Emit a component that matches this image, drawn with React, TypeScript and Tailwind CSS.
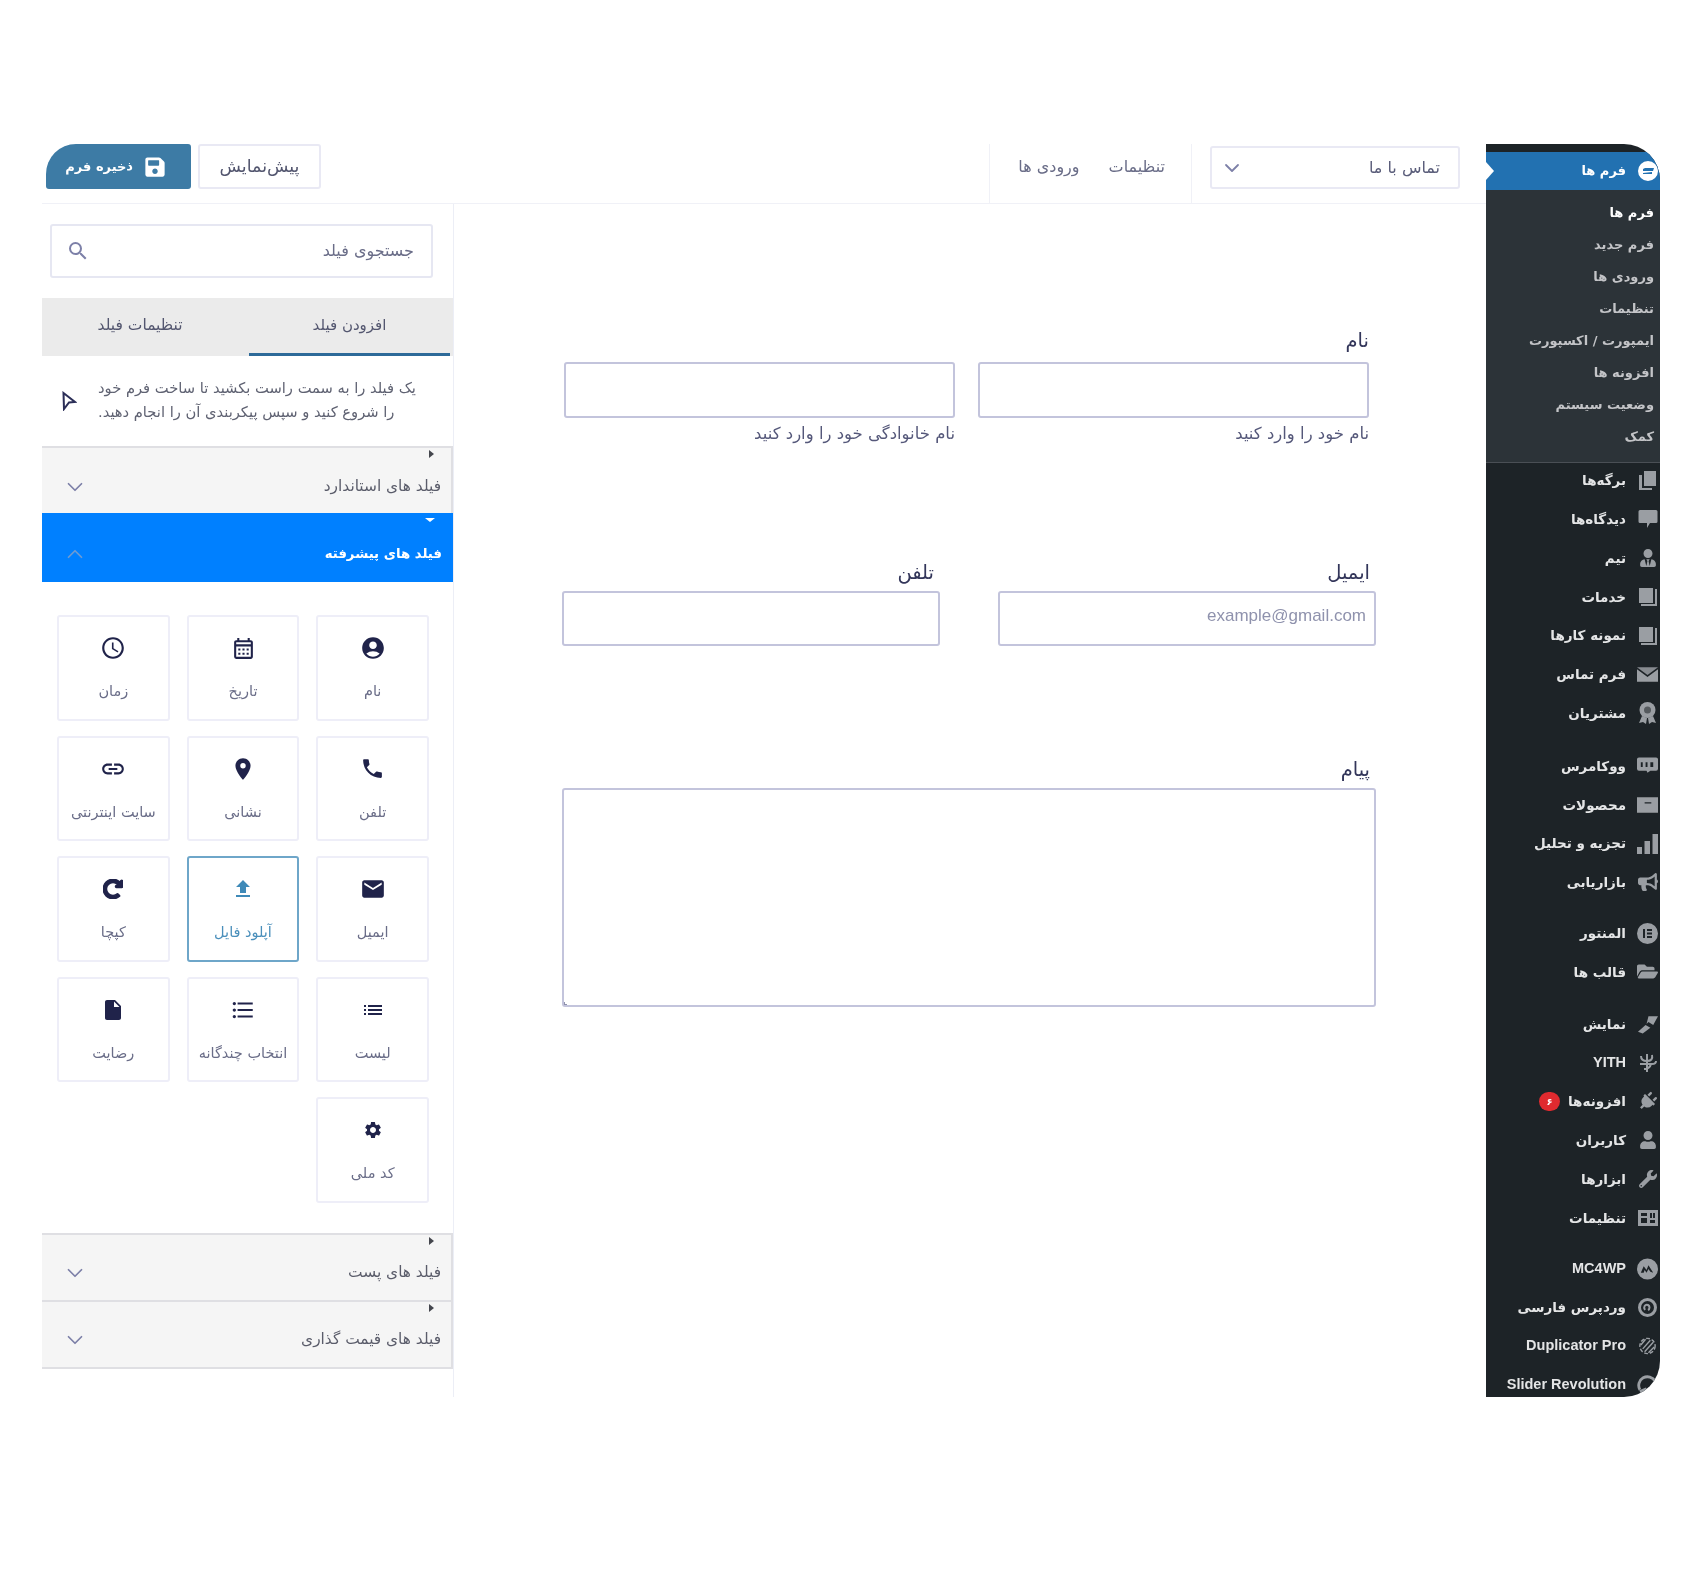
import React from "react";
import { ChevronDown, ChevronUp } from "lucide-react";
import {
  MdAccountCircle, MdOutlineCalendarMonth, MdAccessTime, MdPhone, MdLocationOn, MdLink, MdEmail,
  MdFileUpload, MdList, MdFormatListBulleted, MdInsertDriveFile, MdSettings, MdSearch,
} from "react-icons/md";
import { FaSave, FaRedoAlt, FaUserTie, FaBullhorn, FaPlug, FaUser, FaWrench, FaFolderOpen } from "react-icons/fa";

const Pages = () => (
  <svg width="19" height="19" viewBox="0 0 19 19" fill="currentColor"><path d="M6 0h12v15H6z" /><path d="M1 4h3v13h10v2H1z" /></svg>
);
const Bubble = () => (
  <svg width="20" height="20" viewBox="0 0 20 20" fill="currentColor"><path d="M2 1h16a1.5 1.5 0 0 1 1.5 1.5v10A1.5 1.5 0 0 1 18 14h-6l-3 5v-5H2A1.5 1.5 0 0 1 .5 12.500v-10A1.500 1.500 0 0 1 2 1z" /></svg>
);
const Book = () => (
  <svg width="21" height="21" viewBox="0 0 21 21" fill="currentColor"><path d="M2 2h14v15H2z" /><path d="M18 3h2v17H4v-2h14z" /></svg>
);
const Envelope = () => (
  <svg width="22" height="15" viewBox="0 0 22 15" fill="currentColor"><path d="M0 0h22L11 8z" opacity=".85" /><path d="M0 2l11 8 11-8v13H0z" /></svg>
);
const Rosette = () => (
  <svg width="19" height="22" viewBox="0 0 19 22" fill="currentColor"><circle cx="9.500" cy="8" r="8" /><path d="M4 14l-3 7 4-1 3 2 1-6zM15 14l3 7-4-1-3 2-1-6z" /><circle cx="9.500" cy="8" r="3.500" fill="#1d2327" opacity=".55" /></svg>
);
const Woo = () => (
  <svg width="22" height="17" viewBox="0 0 22 17" fill="currentColor"><path fillRule="evenodd" d="M2 0h18a2 2 0 0 1 2 2v10a2 2 0 0 1-2 2h-6l-3 2 -1-2H2a2 2 0 0 1-2-2V2a2 2 0 0 1 2-2zM4 5v5h2V5zm5 0v5h2V5zm5 0v5h3V5z" /></svg>
);
const Box = () => (
  <svg width="22" height="16" viewBox="0 0 22 16" fill="currentColor"><path fillRule="evenodd" d="M0 0h22v16H0zM8 5v1.500h7V5z" /></svg>
);
const Bars = () => (
  <svg width="21" height="20" viewBox="0 0 21 20" fill="currentColor"><path d="M0 13h5v7H0zM7.500 7h5.500v13H7.500zM15.500 0H21v20h-5.500z" /></svg>
);
const Elementor = () => (
  <svg width="21" height="21" viewBox="0 0 21 21" fill="currentColor"><path fillRule="evenodd" d="M10.500 0a10.500 10.500 0 1 1 0 21 10.500 10.500 0 0 1 0-21zM6 6v9h2V6zm4 0v2h5V6zm0 3.500v2h5v-2zm0 3.500v2h5v-2z" /></svg>
);
const Brush = () => (
  <svg width="22" height="20" viewBox="0 0 22 20" fill="currentColor"><path d="M12 2h10l-5 9-5-3-2 2z" /><path d="M9 11l5 3-8 6-5-2z" /></svg>
);
const Yith = () => (
  <svg width="18" height="20" viewBox="0 0 18 20" fill="none" stroke="currentColor" strokeWidth="2"><path d="M2 3c0 4 3 5 6 5M8 1v18M13 2c1 4-1 6-5 6M1 11h12c3 0 4-1 4-3M5 16c3 0 6-1 7-5" /></svg>
);
const SettingsBox = () => (
  <svg width="20" height="16" viewBox="0 0 20 16" fill="currentColor"><path fillRule="evenodd" d="M0 0h20v16H0zM3 3v3h6V3zm0 5v5h6V8zm9-5v5h2V3zm3 0v5h2V3zm-3 7v3h5v-3z" /></svg>
);
const Mc = () => (
  <svg width="22" height="22" viewBox="0 0 22 22" fill="currentColor"><path fillRule="evenodd" d="M11 0a11 11 0 1 1 0 22 11 11 0 0 1 0-22zM4 15l3-7 3 4 2-5 5 8-3-1-2-3-2 4-2-3-1 3z" /></svg>
);
const WpFa = () => (
  <svg width="19" height="19" viewBox="0 0 19 19" fill="none" stroke="currentColor" strokeWidth="3"><circle cx="9.500" cy="9.500" r="8" /><path d="M7 12c-2-3 0-6 3-5 2 1 2 4 0 5" strokeWidth="2" /></svg>
);
const Dup = () => (
  <svg width="22" height="22" viewBox="0 0 22 22" fill="none" stroke="currentColor" strokeWidth="1.500"><circle cx="11" cy="11" r="8" strokeDasharray="4 2" /><path d="M6 14 14 5M8 17l9-10M4 10l5-6M12 18l6-6" /></svg>
);
const Slider = () => (
  <svg width="22" height="22" viewBox="0 0 22 22" fill="none" stroke="currentColor" strokeWidth="3"><path d="M3 16A9 9 0 0 1 19 7" /><path d="M3 18l7-3" /></svg>
);

type Item = { label: string; icon: React.ReactNode; gap?: string; badge?: string; latin?: boolean };
const menu: Item[] = [
  { label: "برگه‌ها", icon: <Pages /> },
  { label: "دیدگاه‌ها", icon: <Bubble /> },
  { label: "تیم", icon: <FaUserTie size={18} /> },
  { label: "خدمات", icon: <Book /> },
  { label: "نمونه کارها", icon: <Book /> },
  { label: "فرم تماس", icon: <Envelope /> },
  { label: "مشتریان", icon: <Rosette /> },
  { label: "ووکامرس", icon: <Woo />, gap: "mt-[14px]" },
  { label: "محصولات", icon: <Box /> },
  { label: "تجزیه و تحلیل", icon: <Bars /> },
  { label: "بازاریابی", icon: <FaBullhorn size={20} /> },
  { label: "المنتور", icon: <Elementor />, gap: "mt-[12px]" },
  { label: "قالب ها", icon: <FaFolderOpen size={21} /> },
  { label: "نمایش", icon: <Brush />, gap: "mt-[13px]" },
  { label: "YITH", icon: <Yith />, latin: true },
  { label: "افزونه‌ها", icon: <FaPlug size={19} className="rotate-45" />, badge: "۶" },
  { label: "کاربران", icon: <FaUser size={18} /> },
  { label: "ابزارها", icon: <FaWrench size={18} /> },
  { label: "تنظیمات", icon: <SettingsBox /> },
  { label: "MC4WP", icon: <Mc />, gap: "mt-[12px]", latin: true },
  { label: "وردپرس فارسی", icon: <WpFa /> },
  { label: "Duplicator Pro", icon: <Dup />, latin: true },
  { label: "Slider Revolution", icon: <Slider />, latin: true },
];
const sub = ["فرم ها", "فرم جدید", "ورودی ها", "تنظیمات", "ایمپورت / اکسپورت", "افزونه ها", "وضعیت سیستم", "کمک"];

function Sidebar() {
  return (
    <aside className="w-[174px] h-[1253px] shrink-0 bg-[#1d2327] rounded-tr-[36px] rounded-br-[36px] overflow-hidden pt-[8px]">
      <div className="relative h-[38px] bg-[#2271b1] flex items-center pr-[2px] text-white">
        <span className="w-[21px] flex justify-center">
          <svg width="20" height="20" viewBox="0 0 20 20" fill="currentColor"><path fillRule="evenodd" d="M10 0a10 10 0 1 1 0 20 10 10 0 0 1 0-20zM5 8v2h10l1-3H7zM5 12v1h9v-2z" /></svg>
        </span>
        <span className="mr-[11px] text-[13px] font-bold">فرم ها</span>
        <span className="absolute left-0 top-1/2 -translate-y-1/2 w-0 h-0 border-y-[9px] border-y-transparent border-l-[8px] border-l-white" />
      </div>
      <div className="bg-[#2c3338] h-[273px] pt-[7px] pr-[6px] border-b border-[#4a4f55]">
        {sub.map((s, i) => (
          <div key={s} className={`h-[32px] flex items-center text-[13px] font-bold ${i === 0 ? "text-white" : "text-[#c3c4c7]"}`}>{s}</div>
        ))}
      </div>
      <div className="-mt-[2px]">
        {menu.map((m) => (
          <div key={m.label} className={`h-[38.8px] flex items-center pr-[2px] text-[#e4e5e6] ${m.gap ?? ""}`}>
            <span className="w-[21px] flex justify-center text-[#9a9ea3]">{m.icon}</span>
            <span className={`mr-[11px] font-bold whitespace-nowrap ${m.latin ? "text-[14.5px] font-['Liberation_Sans',sans-serif]" : "text-[13.5px]"}`}>{m.label}</span>
            {m.badge && (
              <span className="mr-[8px] w-[21px] h-[19px] rounded-full bg-[#e02a2f] text-white text-[10px] font-bold flex items-center justify-center">{m.badge}</span>
            )}
          </div>
        ))}
      </div>
    </aside>
  );
}

function Header() {
  return (
    <header className="h-[60px] flex items-start border-b border-[#f0f1f7] pr-[26px] pl-[4px]">
      <div className="mt-[2px] w-[250px] h-[43px] border-2 border-[#e9e9f4] rounded-[3px] flex items-center justify-between pr-[18px] pl-[8px] text-[16px] text-[#5a5d7a]">
        <span>تماس با ما</span>
        <ChevronDown size={24} strokeWidth={1.8} className="text-[#7d80a8]" />
      </div>
      <nav className="mr-[18px] w-[203px] h-[59px] border-x border-[#f0f1f7] flex items-center pr-[26px] pb-[14px] gap-[29px] text-[16px] text-[#6a6d88]">
        <span>تنظیمات</span>
        <span>ورودی ها</span>
      </nav>
      <div className="mr-auto flex gap-[7px]">
        <button className="w-[123px] h-[45px] border-2 border-[#e9e9f4] rounded-[3px] text-[17.5px] text-[#53566f] bg-white">پیش‌نمایش</button>
        <button className="w-[145px] h-[45px] bg-[#3d7ba5] rounded-[3px] rounded-tl-[30px] flex items-center pr-[25px] gap-[11px] text-white text-[13px] font-bold">
          <FaSave size={22} />
          <span>ذخیره فرم</span>
        </button>
      </div>
    </header>
  );
}

function FormCanvas() {
  const field = "block w-full bg-white border-2 border-[#c3c4dc] rounded-[3px] outline-none";
  const label = "text-[19.5px] leading-[24px] text-[#33365a]";
  const hint = "text-[16.5px] leading-[20px] text-[#55587a] mt-[6px]";
  return (
    <section className="flex-1 min-w-0">
      <div className="mt-[125px] mr-[117px] ml-[110px]">
        <div className={label}>نام</div>
        <div className="flex gap-[23px] mt-[9px]">
          <div className="flex-1">
            <input className={`${field} h-[56px]`} aria-label="نام" />
            <div className={hint}>نام خود را وارد کنید</div>
          </div>
          <div className="flex-1">
            <input className={`${field} h-[56px]`} aria-label="نام خانوادگی" />
            <div className={hint}>نام خانوادگی خود را وارد کنید</div>
          </div>
        </div>
      </div>
      <div className="mt-[117px] mr-[110px] ml-[108px] flex gap-[58px]">
        <div className="flex-1">
          <div className={`${label} pr-[6px]`}>ایمیل</div>
          <input className={`${field} h-[55px] mt-[6px] pr-[8px] pb-[6px] text-[17px] font-['Liberation_Sans',sans-serif] placeholder:text-[#8f92ad]`} placeholder="example@gmail.com" dir="rtl" />
        </div>
        <div className="flex-1">
          <div className={`${label} pr-[6px]`}>تلفن</div>
          <input className={`${field} h-[55px] mt-[6px]`} aria-label="تلفن" />
        </div>
      </div>
      <div className="mt-[112px] mr-[110px] ml-[108px]">
        <div className={`${label} pr-[6px]`}>پیام</div>
        <div className="relative mt-[6px]">
          <textarea className={`${field} h-[219px] resize-none`} aria-label="پیام" />
          <span className="absolute left-[2px] bottom-[2px] w-[3px] h-[3px] border-l border-b border-[#8f92ad]" />
        </div>
      </div>
    </section>
  );
}

const tri = <span className="absolute right-[17px] top-[2px] w-0 h-0 border-y-[4px] border-y-transparent border-l-[5px] border-l-[#44464d]" />;

function Acc({ title }: { title: string }) {
  return (
    <div className="relative h-[67px] bg-[#f5f5f5] border-t-2 border-r-2 border-[#dfdfe3] flex items-center justify-between pt-[12px] pr-[10px] pl-[20px] text-[15.4px] text-[#5a5c6a]">
      {tri}
      <span>{title}</span>
      <ChevronDown size={26} strokeWidth={1.6} className="text-[#7d80a8]" />
    </div>
  );
}

const cards: { label: string; icon: React.ReactNode; active?: boolean }[] = [
  { label: "نام", icon: <MdAccountCircle size={26} /> },
  { label: "تاریخ", icon: <MdOutlineCalendarMonth size={25} /> },
  { label: "زمان", icon: <MdAccessTime size={26} /> },
  { label: "تلفن", icon: <MdPhone size={25} /> },
  { label: "نشانی", icon: <MdLocationOn size={26} /> },
  { label: "سایت اینترنتی", icon: <MdLink size={26} /> },
  { label: "ایمیل", icon: <MdEmail size={26} /> },
  { label: "آپلود فایل", icon: <MdFileUpload size={24} />, active: true },
  { label: "کپچا", icon: <FaRedoAlt size={20} stroke="currentColor" strokeWidth={40} /> },
  { label: "لیست", icon: <MdList size={24} /> },
  { label: "انتخاب چندگانه", icon: <MdFormatListBulleted size={26} /> },
  { label: "رضایت", icon: <MdInsertDriveFile size={24} /> },
  { label: "کد ملی", icon: <MdSettings size={20} /> },
];

function Panel() {
  return (
    <section className="w-[412px] shrink-0 h-[1193px] border-r border-[#eceef6]">
      <div className="pt-[20px] pr-[20px] pl-[8px]">
        <div className="h-[54px] border-2 border-[#e6e7f2] rounded-[3px] flex items-center justify-between pr-[17px] pl-[14px] text-[16px] text-[#6a6d88]">
          <span>جستجوی فیلد</span>
          <MdSearch size={24} className="text-[#7d80a8]" />
        </div>
      </div>
      <div className="mt-[20px] h-[58px] bg-[#ebebeb] flex pr-[3px] text-[15px] text-[#53566f]">
        <div className="w-[201px] border-b-[3px] border-[#2d6a99] flex items-center justify-center pb-[1px]">افزودن فیلد</div>
        <div className="flex-1 flex items-center justify-center pr-[11px] pb-[3px] text-[15.5px]">تنظیمات فیلد</div>
      </div>
      <div className="h-[90px] flex items-center pr-[36px] pl-[20px] gap-[21px] text-[14.7px] leading-[24px] text-[#5f6272]">
        <p className="flex-1 pb-[2px] text-left whitespace-nowrap">
          یک فیلد را به سمت راست بکشید تا ساخت فرم خود
          <br />
          را شروع کنید و سپس پیکربندی آن را انجام دهید.
        </p>
        <svg width="15" height="20" viewBox="0 0 15 20" fill="none" stroke="#2b2e57" strokeWidth="2" className="shrink-0"><path d="M1.500 2 13 11l-6 .5L2 18z" /></svg>
      </div>
      <Acc title="فیلد های استاندارد" />
      <div className="relative h-[69px] bg-[#0080ff] flex items-center justify-between pt-[12px] pr-[11px] pl-[20px] text-[13.3px] font-bold text-white">
        <span className="absolute right-[18px] top-[5px] w-0 h-0 border-x-[5px] border-x-transparent border-t-[4px] border-t-white" />
        <span>فیلد های پیشرفته</span>
        <ChevronUp size={26} strokeWidth={1.6} className="text-[#6f9bd1]" />
      </div>
      <div className="pt-[33px] pb-[30px] pr-[24px] pl-[15px] grid grid-cols-3 gap-x-[17px] gap-y-[15px]">
        {cards.map((c) => (
          <div key={c.label} className={`h-[105.5px] rounded-[3px] border-2 flex flex-col items-center ${c.active ? "border-[#6ea6c9] text-[#3f8ab8]" : "border-[#eeeef8] text-[#20234a]"}`}>
            <div className="h-[62px] flex items-center justify-center">{c.icon}</div>
            <div className={`text-[14.5px] leading-[24px] whitespace-nowrap ${c.active ? "text-[#4a8fbb]" : "text-[#6a6d88]"}`}>{c.label}</div>
          </div>
        ))}
      </div>
      <Acc title="فیلد های پست" />
      <div className="border-b-2 border-[#dfdfe3]">
        <Acc title="فیلد های قیمت گذاری" />
      </div>
    </section>
  );
}

export default function App() {
  return (
    <div dir="rtl" className="h-[1580px] bg-white pt-[144px] pr-[26px] pl-[42px] flex items-start font-['DejaVu_Sans',sans-serif] blur-[0.4px]">
      <Sidebar />
      <main className="flex-1 min-w-0">
        <Header />
        <div className="flex items-start">
          <FormCanvas />
          <Panel />
        </div>
      </main>
    </div>
  );
}
